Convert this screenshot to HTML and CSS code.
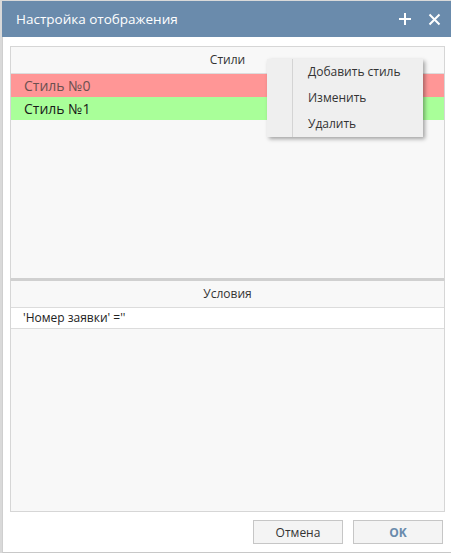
FILE: index.html
```html
<!DOCTYPE html>
<html>
    <head>
        <title>Настройка отображения</title>
        <link rel="stylesheet" href="styles.css">
    </head>
    <body>
        <div class="dialog">

            <div class="header">
                <span class="caption">Настройка отображения</span>
                <span class="tools">
                    <svg width="14" height="14" viewBox="0 0 14 14"><path d="M7 1V13M1 7H13" stroke="#fff" stroke-width="2"/></svg>
                    <svg width="13" height="13" viewBox="0 0 13 13"><path d="M1.5 1.5L11.5 11.5M11.5 1.5L1.5 11.5" stroke="#fff" stroke-width="2"/></svg>
                </span>
            </div>

            <div class="content">

                <div class="panel styles">
                    <div class="panel-title">Стили</div>
                    <div class="row red">Стиль №0</div>
                    <div class="row green">Стиль №1</div>

                    <div class="menu">
                        <div class="menu-item">Добавить стиль</div>
                        <div class="menu-item">Изменить</div>
                        <div class="menu-item">Удалить</div>
                    </div>
                </div>

                <div class="panel conditions">
                    <div class="panel-title">Условия</div>
                    <div class="cond">'Номер заявки' =''</div>
                </div>

            </div>

            <div class="buttons">
                <button class="btn">Отмена</button>
                <button class="btn ok">OK</button>
            </div>

        </div>
    </body>
</html>
```

FILE: styles.css
```css
body {
    margin: 0;
    background-color: #d9d9d9;
    font-family: "Open Sans", "Noto Sans", sans-serif;
}

.dialog {
    margin-left: 2px;
    margin-top: 1px;
    width: 449px;
    height: 552px;
    background-color: #fff;
    border-left: 1px solid #cfcfcf;
    border-bottom: 1px solid #c8c8c8;
    box-sizing: border-box;
    display: flex;
    flex-direction: column;
}

.header {
    height: 36px;
    margin-left: -1px;
    background-color: #6a8bac;
    color: #fff;
    display: flex;
    align-items: center;
    justify-content: space-between;
    padding-left: 14px;
    padding-right: 10px;
    font-size: 13.5px;
}

.tools {
    display: flex;
    align-items: center;
    gap: 16px;
}

.tools svg {
    display: block;
}

.content {
    padding: 9px 6px 0 7px;
    display: flex;
    flex-direction: column;
}

.panel {
    border: 1px solid #d6d6d6;
    background-color: #f8f8f8;
}

.styles {
    height: 231px;
    position: relative;
    border-bottom: 2px solid #d0d0d0;
}

.conditions {
    height: 230px;
    border-top: 1px solid #d0d0d0;
}

.panel-title {
    height: 26px;
    line-height: 26px;
    text-align: center;
    font-size: 12px;
    color: #333;
    border-bottom: 1px solid #dcdcdc;
}

.row {
    height: 23px;
    line-height: 23px;
    padding-left: 13px;
    font-size: 14px;
}

.red {
    background-color: #ff9696;
    color: #6b5050;
}

.green {
    background-color: #a9ff99;
    color: #1a1a1a;
}

.cond {
    height: 20px;
    line-height: 20px;
    padding-left: 12px;
    font-size: 12px;
    color: #222;
    background-color: #fff;
    border-bottom: 1px solid #dcdcdc;
}

.menu {
    position: absolute;
    left: 256px;
    top: 12px;
    width: 130px;
    padding-left: 26px;
    box-shadow: 2px 2px 4px rgba(0, 0, 0, 0.35);
    background-color: #efefef;
    background-image: linear-gradient(to right, #efefef 25px, #d4d4d4 25px, #d4d4d4 26px, #efefef 26px);
}

.menu-item {
    height: 26px;
    line-height: 26px;
    padding-left: 15px;
    font-size: 12px;
    color: #333;
}

.buttons {
    display: flex;
    justify-content: flex-end;
    gap: 10px;
    padding-top: 8px;
    padding-right: 8px;
}

.btn {
    width: 90px;
    height: 24px;
    background-color: #f4f4f4;
    border: 1px solid #c6c6c6;
    font-family: "Open Sans", "Noto Sans", sans-serif;
    font-size: 12px;
    color: #333;
}

.ok {
    color: #6a8bac;
    font-weight: bold;
}
```
